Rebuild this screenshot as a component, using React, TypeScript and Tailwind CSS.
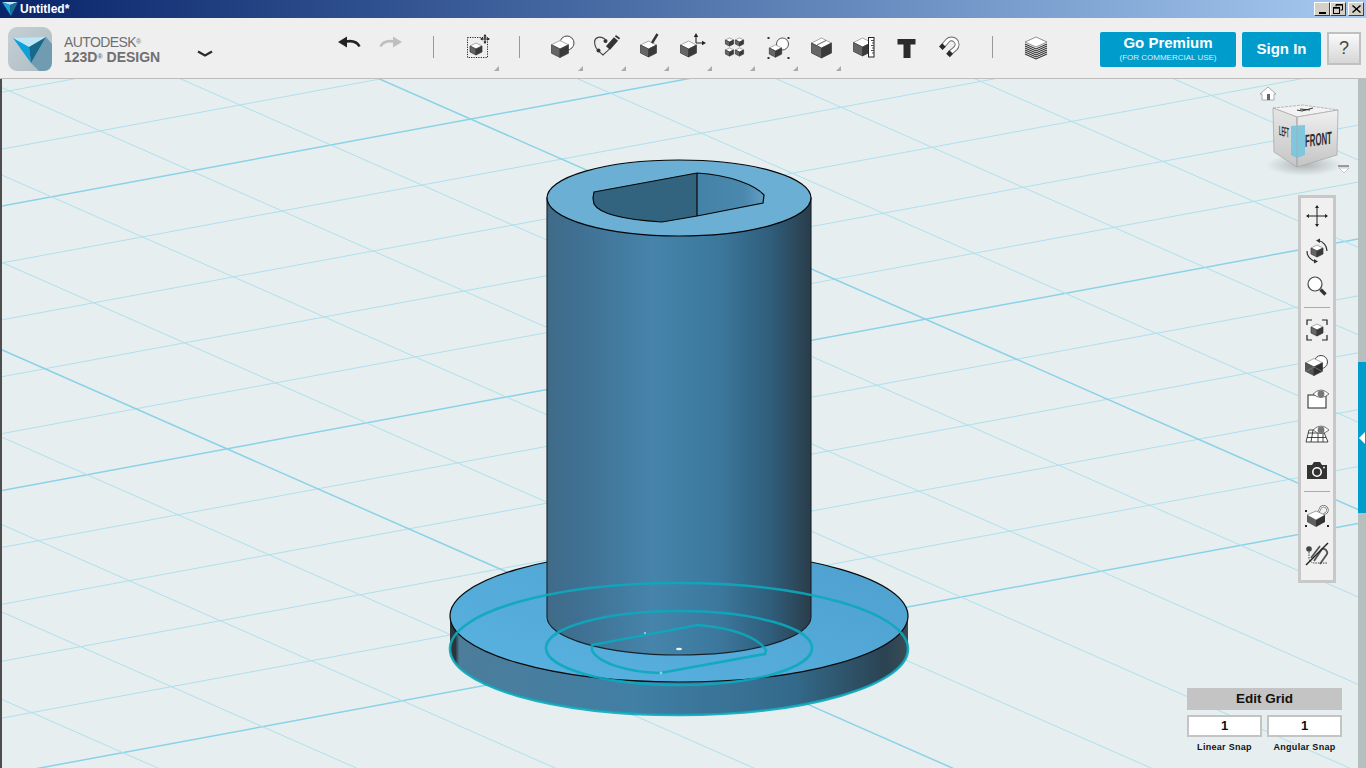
import React from 'react';

// grid is basically affine, so lines come from two offsets and two slopes
const rowLines = Array.from({ length: 13 }, (_, i) => i - 2);
const colLines = Array.from({ length: 14 }, (_, i) => i - 4);

function Cube({ x, y, r, top = '#ffffff', left = '#666666', right = '#3a3a3a' }: { x: number; y: number; r: number; top?: string; left?: string; right?: string }) {
  return (
    <g stroke="#3a3a3a" strokeWidth="0.7" strokeLinejoin="round">
      <polygon points={`${x},${y - r} ${x + r},${y - r / 2} ${x},${y} ${x - r},${y - r / 2}`} fill={top} stroke="#888888" />
      <polygon points={`${x - r},${y - r / 2} ${x},${y} ${x},${y + r} ${x - r},${y + r / 2}`} fill={left} />
      <polygon points={`${x + r},${y - r / 2} ${x},${y} ${x},${y + r} ${x + r},${y + r / 2}`} fill={right} />
    </g>
  );
}

function Move({ x, y, r, w = 1, a = 2.2 }: { x: number; y: number; r: number; w?: number; a?: number }) {
  return (
    <g stroke="#222222" strokeWidth={w} fill="#222222">
      <path d={`M${x} ${y - r}V${y + r}M${x - r} ${y}H${x + r}`} fill="none" />
      <polygon strokeWidth="0" points={`${x},${y - r - 1} ${x - a},${y - r + a} ${x + a},${y - r + a}`} />
      <polygon strokeWidth="0" points={`${x},${y + r + 1} ${x - a},${y + r - a} ${x + a},${y + r - a}`} />
      <polygon strokeWidth="0" points={`${x - r - 1},${y} ${x - r + a},${y - a} ${x - r + a},${y + a}`} />
      <polygon strokeWidth="0" points={`${x + r + 1},${y} ${x + r - a},${y - a} ${x + r - a},${y + a}`} />
    </g>
  );
}

function Eye({ x, y }: { x: number; y: number }) {
  return (
    <g>
      <path d={`M${x - 8} ${y}Q${x} ${y - 8} ${x + 8} ${y}Q${x} ${y + 7} ${x - 8} ${y}Z`} fill="#ffffff" stroke="#555555" strokeWidth="0.8" />
      <circle cx={x} cy={y} r="3.4" fill="#777777" />
    </g>
  );
}

function Ico({ size = 32, children }: { size?: number; children: React.ReactNode }) {
  return (
    <svg width={size} height={size} viewBox={`0 0 ${size} ${size}`}>
      {children}
    </svg>
  );
}

const toolIcons: { key: string; mark: boolean; icon: React.ReactNode }[] = [
  {
    key: 'shapes',
    mark: true,
    icon: (
      <>
        <circle cx="20" cy="13" r="7" fill="#ffffff" stroke="#444444" strokeWidth="1" />
        <Cube x={13} y={19} r={8.5} />
      </>
    ),
  },
  {
    key: 'sketch',
    mark: true,
    icon: (
      <>
        <path d="M15 9C9 5 3 8 5 15C6 20 10 22 13 25C15 23 18 21 21 17" fill="none" stroke="#444444" strokeWidth="1.2" />
        <circle cx="15.5" cy="11" r="2" fill="#333333" />
        <circle cx="8.5" cy="20.5" r="2" fill="#333333" />
        <path d="M18 18L26 9" stroke="#333333" strokeWidth="5.5" />
        <path d="M27 8L28 6.5" stroke="#333333" strokeWidth="5" />
      </>
    ),
  },
  {
    key: 'modify',
    mark: true,
    icon: (
      <>
        <Cube x={15.5} y={19} r={8} />
        <path d="M19 13L24.5 4" stroke="#333333" strokeWidth="2.4" />
      </>
    ),
  },
  {
    key: 'transform',
    mark: true,
    icon: (
      <>
        <Cube x={12.5} y={19} r={8} />
        <path d="M20 13V6M20 13H27" stroke="#222222" strokeWidth="1.1" />
        <polygon points="20,3 17.8,7 22.2,7" fill="#222222" />
        <polygon points="30,13 26,10.8 26,15.2" fill="#222222" />
      </>
    ),
  },
  {
    key: 'pattern',
    mark: true,
    icon: (
      <>
        <Cube x={10.5} y={12} r={4.1} />
        <Cube x={20.5} y={12} r={4.1} />
        <Cube x={10.5} y={22} r={4.1} />
        <Cube x={20.5} y={22} r={4.1} />
      </>
    ),
  },
  {
    key: 'group',
    mark: true,
    icon: (
      <>
        <circle cx="20.5" cy="14" r="6" fill="#ffffff" stroke="#444444" strokeWidth="0.9" />
        <Cube x={13.5} y={21} r={6.2} />
        <g fill="#333333">
          <rect x="5.5" y="7" width="2" height="2" />
          <rect x="25.5" y="7" width="2" height="2" />
          <rect x="5.5" y="27" width="2" height="2" />
          <rect x="25.5" y="27" width="2" height="2" />
        </g>
      </>
    ),
  },
  {
    key: 'combine',
    mark: true,
    icon: (
      <>
        <Cube x={16.5} y={18} r={10} />
        <path d="M21 10.5L12 15" stroke="#555555" strokeWidth="0.9" />
      </>
    ),
  },
  {
    key: 'measure',
    mark: false,
    icon: (
      <>
        <Cube x={14.5} y={17} r={9} />
        <rect x="20.5" y="7.5" width="5.5" height="19.5" fill="#ffffff" stroke="#222222" strokeWidth="1" />
        <path d="M23 10.5H26M24 13H26M23 15.5H26M24 18H26M23 20.5H26M24 23H26" stroke="#222222" strokeWidth="0.8" />
      </>
    ),
  },
  {
    key: 'text',
    mark: false,
    icon: (
      <>
        <rect x="6.5" y="9" width="18" height="5.5" fill="#2b2b2b" />
        <rect x="12.5" y="9" width="7" height="19" fill="#2b2b2b" />
      </>
    ),
  },
  {
    key: 'snap',
    mark: false,
    icon: (
      <>
        <path d="M9 16L13.6 10.6A5.5 5.5 0 0 1 21.4 18.4L15.5 23.5" fill="none" stroke="#666666" strokeWidth="5" />
        <path d="M9 16L13.6 10.6A5.5 5.5 0 0 1 21.4 18.4L15.5 23.5" fill="none" stroke="#ffffff" strokeWidth="3.2" />
        <path d="M6.8 18.3L10 15M14 25.5L17.2 22" stroke="#2b2b2b" strokeWidth="5" />
      </>
    ),
  },
];

function ToolCell({ mark, w = 'w-[43px]', children }: { mark: boolean; w?: string; children: React.ReactNode }) {
  return (
    <div className={`relative flex h-[60px] shrink-0 justify-center pt-[12px] ${w}`}>
      {children}
      {mark && <div className="absolute bottom-[7px] right-[1px] h-0 w-0 border-b-[5px] border-l-[5px] border-b-[#aaaaaa] border-l-transparent" />}
    </div>
  );
}

function Separator({ className }: { className: string }) {
  return (
    <div className={`flex h-[60px] shrink-0 pt-[18px] ${className}`}>
      <div className="h-[22px] w-px bg-[#999999]" />
    </div>
  );
}

function TitleBar() {
  return (
    <div className="flex h-[18px] shrink-0 items-center bg-gradient-to-r from-[#0a246a] to-[#a6caf0] pl-[2px] pr-[2px]">
      <svg width="16" height="14" viewBox="0 0 16 14">
        <polygon points="0,0 16,0 8,3" fill="#bfe8f8" />
        <polygon points="0,0 8,3 9,14" fill="#19a6dc" />
        <polygon points="16,0 8,3 9,14" fill="#1a6f90" />
      </svg>
      <span className="ml-[2px] text-[12px] font-bold text-white">Untitled*</span>
      <div className="ml-auto flex">
        <button className="flex h-[14px] w-[16px] items-end justify-center border border-b-[#404040] border-l-white border-r-[#404040] border-t-white bg-[#d4d0c8] pb-[1px]">
          <div className="h-[2px] w-[7px] bg-black" />
        </button>
        <button className="mr-[2px] flex h-[14px] w-[16px] items-center justify-center border border-b-[#404040] border-l-white border-r-[#404040] border-t-white bg-[#d4d0c8]">
          <svg width="10" height="10" viewBox="0 0 10 10" fill="none" stroke="#000000">
            <path d="M3 2.5V0.5H9.5V6H7.5" />
            <path d="M3 1H9.5" strokeWidth="1.2" />
            <rect x="0.5" y="3.5" width="6" height="6" />
            <path d="M0.5 4.2H6.5" />
          </svg>
        </button>
        <button className="flex h-[14px] w-[16px] items-center justify-center border border-b-[#404040] border-l-white border-r-[#404040] border-t-white bg-[#d4d0c8]">
          <svg width="9" height="8" viewBox="0 0 9 8" stroke="#000000" strokeWidth="1.4">
            <path d="M0.5 0.5L8.5 7.5M8.5 0.5L0.5 7.5" />
          </svg>
        </button>
      </div>
    </div>
  );
}

function Toolbar() {
  return (
    <div className="flex h-[61px] shrink-0 border-b border-b-[#bdbdbd] bg-[#efefef]">
      <div className="flex w-[327px] shrink-0 items-start pl-[8px] pt-[9px]">
        <svg width="44" height="44" viewBox="0 0 44 44">
          <defs>
            <linearGradient id="logoBg" x1="0" y1="0" x2="1" y2="1">
              <stop offset="0" stopColor="#c4d0d5" />
              <stop offset="1" stopColor="#aebcc3" />
            </linearGradient>
          </defs>
          <rect width="44" height="44" rx="9" fill="url(#logoBg)" />
          <path d="M38 10L44 17V35Q44 44 35 44H31L23 36Z" fill="#6f9cb0" />
          <polygon points="5,11 38,10 21,20" fill="#bde7f7" />
          <polygon points="5,11 21,20 23,36" fill="#0ea0d9" />
          <polygon points="38,10 21,20 23,36" fill="#17688a" />
        </svg>
        <div className="ml-[12px] mt-[8px] flex w-[100px] flex-col text-[#707070]">
          <span className="h-[15px] text-[14px] leading-[15px] tracking-[-0.6px]">
            AUTODESK<sup className="text-[7px]">®</sup>
          </span>
          <span className="h-[15px] text-[14px] font-bold leading-[15px]">
            123D<sup className="text-[7px]">®</sup> DESIGN
          </span>
        </div>
        <svg className="ml-[33px] mt-[23px]" width="16" height="8" viewBox="0 0 16 8" fill="none" stroke="#2b2b2b" strokeWidth="2.2">
          <path d="M1 1.5L8 5.5L15 1.5" />
        </svg>
      </div>

      <ToolCell mark={false}>
        <Ico size={24}>
          <polygon points="1,12 10,6.5 10,17.5" fill="#222222" />
          <path d="M9 11.5C15 10.5 20 11.5 22.5 16.5" fill="none" stroke="#222222" strokeWidth="2.6" />
        </Ico>
      </ToolCell>
      <ToolCell mark={false} w="w-[41px]">
        <Ico size={24}>
          <polygon points="23,12 14,6.5 14,17.5" fill="#bfbfbf" />
          <path d="M15 11.5C9 10.5 4 11.5 1.5 16.5" fill="none" stroke="#bfbfbf" strokeWidth="2.6" />
        </Ico>
      </ToolCell>
      <Separator className="w-[45px] pl-[22px]" />
      <ToolCell mark w="w-[44px]">
        <Ico>
          <rect x="5.5" y="7.5" width="20" height="20" fill="none" stroke="#222222" strokeWidth="1" strokeDasharray="1.2 1.2" />
          <Cube x={14} y={19} r={6} />
          <Move x={23} y={9} r={4} a={1.6} />
        </Ico>
      </ToolCell>
      <Separator className="w-[41px] pl-[19px]" />
      {toolIcons.map((t) => (
        <ToolCell key={t.key} mark={t.mark}>
          <Ico>{t.icon}</Ico>
        </ToolCell>
      ))}
      <Separator className="w-[43px] pl-[21px]" />
      <ToolCell mark={false}>
        <Ico>
          <polygon points="16,7 27,12 16,17 5,12" fill="#ffffff" stroke="#777777" strokeWidth="0.8" />
          {[0, 1, 2, 3, 4, 5].map((i) => (
            <polyline key={i} points={`5,${14 + i * 2} 16,${19 + i * 2} 27,${14 + i * 2}`} fill="none" stroke="#333333" strokeWidth="1.1" />
          ))}
        </Ico>
      </ToolCell>

      <div className="ml-auto flex items-start pr-[5px] pt-[14px]">
        <button className="flex h-[35px] w-[136px] flex-col items-center rounded-[2px] bg-[#009ccc] pt-[3px] text-white">
          <span className="text-[15px] font-bold leading-[16px]">Go Premium</span>
          <span className="text-[8px] leading-[14px] text-[#d8f0f8]">(FOR COMMERCIAL USE)</span>
        </button>
        <button className="ml-[6px] h-[35px] w-[79px] rounded-[2px] bg-[#009ccc] text-[15px] font-bold text-white">Sign In</button>
        <button className="ml-[6px] h-[33px] w-[34px] border-2 border-[#c0c0c0] bg-gradient-to-b from-[#fafafa] to-[#d6d6d6] text-[18px] text-[#444444]">?</button>
      </div>
    </div>
  );
}

function Scene() {
  return (
    <svg className="absolute inset-0" width="1356" height="689" viewBox="2 79 1356 689">
      <defs>
        <linearGradient id="wall" x1="0" y1="0" x2="1" y2="0">
          <stop offset="0" stopColor="#3f6b88" />
          <stop offset="0.12" stopColor="#3f7092" />
          <stop offset="0.4" stopColor="#4684ab" />
          <stop offset="0.65" stopColor="#3c789d" />
          <stop offset="0.85" stopColor="#2f5d7a" />
          <stop offset="1" stopColor="#2a3d4a" />
        </linearGradient>
        <linearGradient id="rim" x1="0" y1="0" x2="1" y2="0">
          <stop offset="0" stopColor="#2b363c" />
          <stop offset="0.012" stopColor="#2b363c" />
          <stop offset="0.02" stopColor="#4c7d9a" />
          <stop offset="0.4" stopColor="#417fa5" />
          <stop offset="0.75" stopColor="#336a8b" />
          <stop offset="0.95" stopColor="#2b4352" />
          <stop offset="1" stopColor="#3a4c56" />
        </linearGradient>
        <linearGradient id="disc" x1="0" y1="1" x2="1" y2="0">
          <stop offset="0" stopColor="#59b3e1" />
          <stop offset="1" stopColor="#4e9fce" />
        </linearGradient>
        <linearGradient id="holeRight" x1="0" y1="0" x2="1" y2="0">
          <stop offset="0" stopColor="#4582a8" />
          <stop offset="0.7" stopColor="#4a88ae" />
          <stop offset="1" stopColor="#619ec4" />
        </linearGradient>
      </defs>

      {rowLines.map((k) => {
        const y0 = 206.4 + k * 56.9;
        const major = k % 5 === 0;
        return <line key={`r${k}`} x1="0" y1={y0} x2="1366" y2={y0 - 1366 * 0.1855} stroke={major ? '#8ad2e8' : '#aee0ed'} strokeWidth={major ? 1.5 : 1} />;
      })}
      {colLines.map((j) => {
        const y0 = -88 + j * 87.4;
        const major = j % 5 === 0;
        return <line key={`c${j}`} x1="0" y1={y0} x2="1366" y2={y0 + 1366 * 0.44} stroke={major ? '#8ad2e8' : '#aee0ed'} strokeWidth={major ? 1.5 : 1} />;
      })}

      {/* base flange */}
      <path d="M450 616V649A229 66 0 0 0 908 649V616Z" fill="url(#rim)" />
      <ellipse cx="679" cy="616" rx="229" ry="66" fill="url(#disc)" stroke="#0a0a0a" strokeWidth="1.2" />

      {/* shaft */}
      <path d="M547 198V617A132 38 0 0 0 811 617V198Z" fill="url(#wall)" stroke="#16222a" strokeWidth="1.1" />
      <ellipse cx="679" cy="198" rx="132" ry="38" fill="#6bafd5" stroke="#050505" strokeWidth="1.2" />

      {/* D shaped bore */}
      <path d="M594 192L697 173L697 216L662 222C630 220 600 215 594 204L593 198Z" fill="#33647f" />
      <path d="M697 173C730 175 755 185 764 195L763 203L697 216Z" fill="url(#holeRight)" />
      <path d="M594 192L697 173C730 175 755 185 764 195L763 203L697 216L662 222C630 220 600 215 594 204L593 198ZM697 173V216" fill="none" stroke="#050505" strokeWidth="1.2" />

      {/* sketch curves on the bottom face */}
      <g fill="none" stroke="#0ca8bd" strokeOpacity="0.9">
        <ellipse cx="679" cy="649" rx="229" ry="66" strokeWidth="2.6" />
        <ellipse cx="679" cy="648" rx="133" ry="37" strokeWidth="2.6" />
        <path d="M592 645L698 625C735 628 758 638 766 650L765 654L660 673C625 672 597 662 592 650Z" strokeWidth="2.6" />
      </g>
      <ellipse cx="679" cy="649" rx="3" ry="1.2" fill="#e8f4f8" />
      <circle cx="645" cy="633" r="1" fill="#a8dfe8" />
      <circle cx="661" cy="673" r="1.5" fill="#80d4dc" />
    </svg>
  );
}

function ViewCube() {
  return (
    <svg className="absolute left-[1258px] top-[6px]" width="95" height="95" viewBox="1260 85 95 95">
      <defs>
        <linearGradient id="cubeL" x1="0" y1="0" x2="0" y2="1">
          <stop offset="0" stopColor="#e6e6e6" />
          <stop offset="1" stopColor="#c6c6c6" />
        </linearGradient>
        <linearGradient id="cubeR" x1="0" y1="0" x2="0" y2="1">
          <stop offset="0" stopColor="#f0f0f0" />
          <stop offset="1" stopColor="#c4c4c4" />
        </linearGradient>
        <radialGradient id="cubeShadow">
          <stop offset="0" stopColor="#9aa3a4" stopOpacity="0.75" />
          <stop offset="1" stopColor="#9aa3a4" stopOpacity="0" />
        </radialGradient>
      </defs>
      <ellipse cx="1304" cy="165" rx="38" ry="11" fill="url(#cubeShadow)" />
      <polygon points="1273,108 1303,105 1338,110 1297,117" fill="#f2f2f2" stroke="#aaaaaa" strokeWidth="0.8" strokeDasharray="3 1" />
      <polygon points="1273,108 1297,117 1297,167 1274,152" fill="url(#cubeL)" stroke="#aaaaaa" strokeWidth="0.8" />
      <polygon points="1297,117 1338,110 1337,155 1297,167" fill="url(#cubeR)" stroke="#aaaaaa" strokeWidth="0.8" />
      <polygon points="1291,126 1305,125 1305,155 1297,158 1291,155" fill="#80c6dd" />
      <path d="M1297 117V167" stroke="#aaaaaa" strokeWidth="0.6" />
      <path d="M1297 110L1302 111L1313 108M1300 109L1310 110" stroke="#333333" strokeWidth="1" fill="none" />
      <text transform="translate(1279 135) skewY(15) scale(0.36 1.25)" fontFamily="'Liberation Sans', sans-serif" fontWeight="700" fontSize="11" fill="#2b2b2b">LEFT</text>
      <text transform="translate(1305 147) skewY(-7) scale(0.6 1.35)" fontFamily="'Liberation Sans', sans-serif" fontWeight="700" fontSize="13" fill="#2b2b2b">FRONT</text>
      <polygon points="1268,87 1276,94 1274,94 1274,100 1262,100 1262,94 1260,94" fill="#ffffff" stroke="#9a9a9a" strokeWidth="0.8" />
      <rect x="1267" y="94" width="3" height="6" fill="#666666" />
      <rect x="1338" y="165" width="11" height="2" fill="#999999" />
      <polygon points="1339,168 1349,168 1344,173" fill="#ffffff" stroke="#a8a8a8" strokeWidth="0.6" />
    </svg>
  );
}

function NavRail() {
  return (
    <div className="absolute left-[1296px] top-[116px] flex h-[388px] w-[38px] flex-col items-center border-[3px] border-[#c8c8c8] bg-[#f0f0f0] pt-[4px]">
      <Ico size={28}>
        <Move x={14} y={14} r={10} a={2} />
      </Ico>
      <div className="mt-[7px] flex">
        <Ico size={28}>
          <Cube x={14} y={14} r={6} />
          <path d="M15 3.5A10.5 10.5 0 0 1 24 14M13 24.5A10.5 10.5 0 0 1 4 14" fill="none" stroke="#333333" strokeWidth="1.2" />
          <polygon points="13,3.5 17,1.5 17,6" fill="#333333" />
          <polygon points="15,24.5 11,22 11,26.5" fill="#333333" />
        </Ico>
      </div>
      <div className="mt-[7px] flex">
        <Ico size={28}>
          <circle cx="12" cy="12" r="7" fill="#ffffff" stroke="#444444" strokeWidth="1.2" />
          <path d="M17.5 17.5L22.5 22.5" stroke="#333333" strokeWidth="3.4" />
        </Ico>
      </div>
      <div className="mt-[7px] h-px w-[26px] bg-[#aaaaaa]" />
      <div className="mt-[8px] flex">
        <Ico size={28}>
          <path d="M4 9V4H9M19 4H24V9M24 19V24H19M9 24H4V19" fill="none" stroke="#222222" strokeWidth="1.2" />
          <Cube x={14} y={14} r={6} />
        </Ico>
      </div>
      <div className="mt-[8px] flex">
        <Ico size={28}>
          <circle cx="18" cy="10" r="6.5" fill="#ffffff" stroke="#444444" strokeWidth="1" />
          <Cube x={11} y={15} r={8.5} left="#555555" right="#2f2f2f" />
          <path d="M2.5 19.5L11 15L19.5 19.5" stroke="#8a8a8a" strokeWidth="0.7" fill="none" />
        </Ico>
      </div>
      <div className="mt-[6px] flex">
        <Ico size={28}>
          <rect x="5" y="9" width="18" height="13" fill="#ffffff" stroke="#222222" strokeWidth="1" />
          <Eye x={18} y={8} />
        </Ico>
      </div>
      <div className="mt-[7px] flex">
        <Ico size={28}>
          <path d="M6 9H20L25 21H3ZM5 12H21M4 16.5H23M10 9L8 21M15 9L15 21M20 9L20 21" fill="#ffffff" stroke="#333333" strokeWidth="0.9" />
          <Eye x={18} y={9} />
        </Ico>
      </div>
      <div className="mt-[8px] flex">
        <Ico size={28}>
          <path d="M4 8H9L11 5H17L19 8H24V22H4Z" fill="#333333" />
          <circle cx="14" cy="15" r="4.2" fill="#333333" stroke="#ffffff" strokeWidth="1.6" />
          <circle cx="21" cy="10.5" r="0.9" fill="#ffffff" />
        </Ico>
      </div>
      <div className="mt-[6px] h-px w-[26px] bg-[#aaaaaa]" />
      <div className="mt-[9px] flex">
        <Ico size={28}>
          <path d="M15 12L18 6A4 4 0 0 1 24 11L19 15" fill="none" stroke="#666666" strokeWidth="2.2" />
          <path d="M15 12L18 6A4 4 0 0 1 24 11L19 15" fill="none" stroke="#ffffff" strokeWidth="1" />
          <polygon points="13,10 22,14 13,19 4,14" fill="#ffffff" stroke="#666666" strokeWidth="0.6" />
          <polygon points="4,14 13,19 13,26 4,21" fill="#5f5f5f" />
          <polygon points="22,14 13,19 13,26 22,21" fill="#333333" />
          <g fill="#222222">
            <rect x="2" y="9" width="2" height="2" />
            <rect x="2" y="24" width="2" height="2" />
            <rect x="24" y="24" width="2" height="2" />
          </g>
        </Ico>
      </div>
      <div className="mt-[11px] flex">
        <Ico size={28}>
          <circle cx="6" cy="9" r="2.8" fill="#444444" />
          <path d="M6 12V18Q6 22 11 23H24" fill="none" stroke="#444444" strokeWidth="1" strokeDasharray="1.5 1" />
          <path d="M11 21L19 9A4 4 0 0 1 24 14L17 24M8 18L17 6" fill="none" stroke="#555555" strokeWidth="1.8" />
          <path d="M3 25L25 3" stroke="#222222" strokeWidth="1.4" />
        </Ico>
      </div>
    </div>
  );
}

function GridPanel() {
  return (
    <div className="absolute left-[1185px] top-[609px] flex w-[155px] flex-col text-[#111111]">
      <div className="flex h-[22px] items-center justify-center bg-[#c4c4c4] text-[13.5px] font-bold">Edit Grid</div>
      <div className="mt-[5px] flex gap-[5px]">
        <div className="flex h-[22px] w-[75px] items-center justify-center border-2 border-[#c4c4c4] bg-white text-[13px] font-bold">1</div>
        <div className="flex h-[22px] w-[75px] items-center justify-center border-2 border-[#c4c4c4] bg-white text-[13px] font-bold">1</div>
      </div>
      <div className="mt-[4px] flex gap-[5px] text-[9px] font-bold tracking-[0.3px]">
        <span className="w-[75px] text-center">Linear Snap</span>
        <span className="w-[75px] text-center">Angular Snap</span>
      </div>
    </div>
  );
}

export default function App() {
  return (
    <div className="flex h-[768px] w-[1366px] flex-col overflow-hidden font-['Liberation_Sans',Arial,sans-serif]">
      <TitleBar />
      <Toolbar />
      <div className="flex min-h-0 flex-1">
        <div className="w-[2px] shrink-0 bg-[#4d4d4d]" />
        <div className="relative flex-1 overflow-hidden bg-[#e7eeef]">
          <Scene />
          <ViewCube />
          <NavRail />
          <GridPanel />
        </div>
        <div className="flex w-[8px] shrink-0 flex-col bg-[#b4bfbe]">
          <div className="mt-[283px] flex h-[151px] items-center bg-[#009ccc]">
            <div className="ml-[1px] h-0 w-0 border-y-[6px] border-r-[6px] border-y-transparent border-r-white" />
          </div>
        </div>
      </div>
    </div>
  );
}
